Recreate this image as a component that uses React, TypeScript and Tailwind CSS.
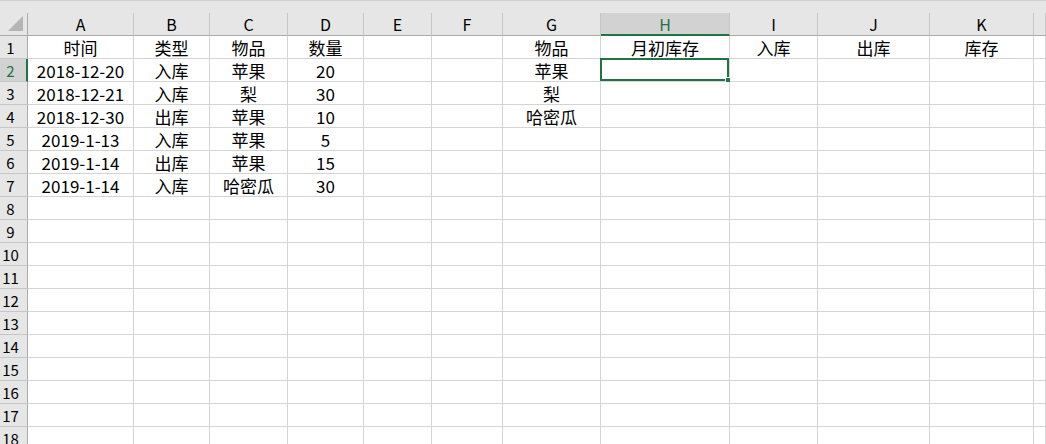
import React from 'react';

const cols = ['A', 'B', 'C', 'D', 'E', 'F', 'G', 'H', 'I', 'J', 'K', ''];

const data: Record<number, string[]> = {
  1: ['时间', '类型', '物品', '数量', '', '', '物品', '月初库存', '入库', '出库', '库存', ''],
  2: ['2018-12-20', '入库', '苹果', '20', '', '', '苹果', '', '', '', '', ''],
  3: ['2018-12-21', '入库', '梨', '30', '', '', '梨', '', '', '', '', ''],
  4: ['2018-12-30', '出库', '苹果', '10', '', '', '哈密瓜', '', '', '', '', ''],
  5: ['2019-1-13', '入库', '苹果', '5', '', '', '', '', '', '', '', ''],
  6: ['2019-1-14', '出库', '苹果', '15', '', '', '', '', '', '', '', ''],
  7: ['2019-1-14', '入库', '哈密瓜', '30', '', '', '', '', '', '', '', ''],
};

const rows = Array.from({ length: 18 }, (_, i) => i + 1);

const font = { fontFamily: '"Noto Sans CJK SC", "Noto Sans", sans-serif' };

export default function App() {
  return (
    <div className="w-[1046px] h-[444px] overflow-hidden bg-white text-[17px] text-black" style={font}>
      {/* top strip */}
      <div className="h-[13px] bg-[#e6e6e6] border-t border-[#d0d0d0]" />

      <div className="grid grid-cols-[28px_106px_76px_78px_76px_68px_71px_98px_129px_88px_112px_104px_1fr]">
        {/* column header row */}
        <div className="h-[23px] bg-[#e6e6e6] border-r border-b border-[#ababab] relative overflow-hidden">
          <div className="absolute right-[4px] bottom-[4px] w-0 h-0 border-l-[15px] border-l-transparent border-b-[15px] border-b-[#b4b4b4]" />
        </div>
        {cols.map((c, i) =>
          c === 'H' ? (
            <div
              key={i}
              className="h-[23px] bg-[#d2d2d2] border-r border-[#c6c6c6] border-b-2 border-b-[#217346] flex items-center justify-center text-[16px] text-[#217346] leading-none"
            >
              {c}
            </div>
          ) : (
            <div
              key={i}
              className="h-[23px] bg-[#e6e6e6] border-r border-r-[#c6c6c6] border-b border-b-[#ababab] flex items-center justify-center text-[16px] leading-none"
            >
              {c}
            </div>
          )
        )}

        {rows.map((r) => (
          <React.Fragment key={r}>
            {r === 2 ? (
              <div className="h-[23px] bg-[#d2d2d2] border-r-2 border-r-[#217346] border-b border-b-[#c6c6c6] flex items-center justify-center pr-[5px] text-[15px] text-[#217346] leading-none">
                {r}
              </div>
            ) : (
              <div className="h-[23px] bg-[#e6e6e6] border-r border-r-[#ababab] border-b border-b-[#c6c6c6] flex items-center justify-center pr-[6px] text-[15px] leading-none">
                {r}
              </div>
            )}
            {cols.map((c, i) => (
              <div
                key={i}
                className="h-[23px] border-r border-b border-[#d4d4d4] flex items-center justify-center leading-none whitespace-nowrap relative"
              >
                {data[r]?.[i] ?? ''}
                {r === 2 && c === 'H' && (
                  <div className="absolute left-[-1px] top-[-1px] right-0 bottom-0 border-2 border-[#217346]">
                    <div className="absolute right-[-4px] bottom-[-4px] w-[6px] h-[6px] bg-[#217346] border border-white" />
                  </div>
                )}
              </div>
            ))}
          </React.Fragment>
        ))}
      </div>
    </div>
  );
}
